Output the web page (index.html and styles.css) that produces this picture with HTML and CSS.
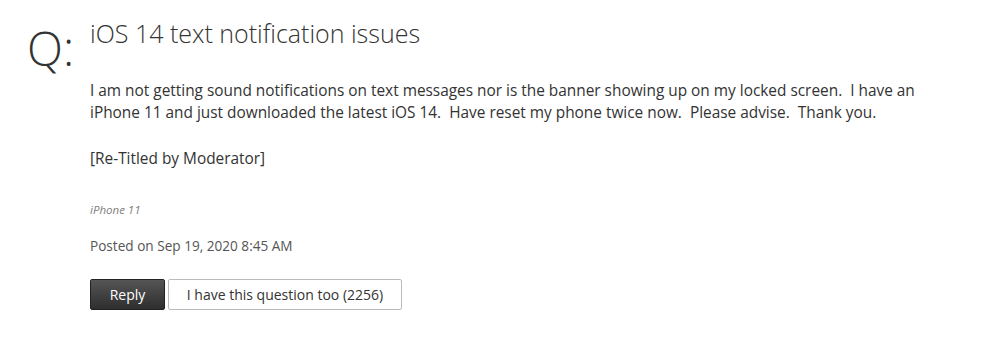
FILE: index.html
```html
<!DOCTYPE html>
<html lang="en">
<head>
  <meta charset="UTF-8" />
  <title>iOS 14 text notification issues</title>
  <link rel="stylesheet" href="styles.css">
</head>
<body>

<!-- Question block -->
<div class="question">
  <div class="q-mark">Q:</div>

  <div class="q-body">
    <h1 class="q-title">iOS 14 text notification issues</h1>

    <div class="q-text">
      <p>I am not getting sound notifications on text messages nor is the banner showing up on my locked screen.&nbsp; I have an iPhone 11 and just downloaded the latest iOS 14.&nbsp; Have reset my phone twice now.&nbsp; Please advise.&nbsp; Thank you.</p>
      <p>[Re-Titled by Moderator]</p>
    </div>

    <div class="q-device">iPhone 11</div>
    <div class="q-posted">Posted on Sep 19, 2020 8:45 AM</div>

    <div class="q-actions">
      <button class="btn btn-reply">Reply</button>
      <button class="btn btn-metoo">I have this question too (2256)</button>
    </div>
  </div>
</div>

</body>
</html>
```

FILE: styles.css
```css
body {
    margin: 0;
    background: #fff;
    color: #333;
    font-family: "Open Sans", sans-serif;
}

.question {
    display: flex;
    padding: 16px 0 0 27px;
}

/* big Q: on the left */
.q-mark {
    width: 63px;
    flex-shrink: 0;
    font-size: 47px;
    font-weight: 300;
    line-height: 1;
    color: #333;
    padding-top: 9px;
}

.q-body {
    width: 850px;
}

.q-title {
    margin: 0;
    font-size: 25px;
    font-weight: 300;
    line-height: 34px;
    color: #333;
}

.q-text {
    margin-top: 30px;
    font-size: 15.4px;
    line-height: 22px;
}

.q-text p {
    margin: 0 0 24px;
}

.q-device {
    margin-top: 32px;
    font-size: 11.5px;
    font-style: italic;
    color: #808080;
}

.q-posted {
    margin-top: 19px;
    font-size: 13.6px;
    color: #555;
}

.q-actions {
    display: flex;
    gap: 3px;
    margin-top: 24px;
}

.btn {
    height: 31px;
    font-family: inherit;
    font-size: 14px;
    border-radius: 2px;
    cursor: pointer;
}

.btn-reply {
    width: 75px;
    color: #fff;
    border: 1px solid #222;
    background: linear-gradient(#555, #2e2e2e);
}

.btn-metoo {
    width: 234px;
    color: #333;
    border: 1px solid #bbb;
    background: #fff;
}
```
